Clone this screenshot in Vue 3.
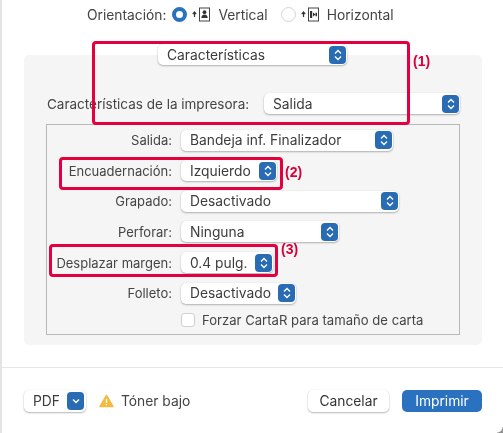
<script setup>
const rows = [
  { label: 'Salida:', value: 'Bandeja inf. Finalizador', width: 212, gap: 30 },
  { label: 'Encuadernación:', value: 'Izquierdo', width: 96, gap: 31 },
  { label: 'Grapado:', value: 'Desactivado', width: 218, gap: 30 },
  { label: 'Perforar:', value: 'Ninguna', width: 158, gap: 31 },
  { label: 'Desplazar margen:', value: '0.4 pulg.', width: 92, gap: 31 },
  { label: 'Folleto:', value: 'Desactivado', width: 115, gap: 30 }
]
</script>

<template>
  <div class="dialog">
    <div class="orientation">
      <span class="ori-label">Orientación:</span>
      <span class="radio on"></span>
      <svg class="ori-icon" width="20" height="15" viewBox="0 0 20 15">
        <path d="M3.5 10V5.5M1.8 7.2 3.5 5l1.7 2.2" fill="none" stroke="#333" stroke-width="1.2" />
        <rect x="8.5" y="1" width="10" height="13" fill="#fff" stroke="#444" />
        <circle cx="13.5" cy="5.2" r="1.9" fill="#333" />
        <path d="M10.3 11c0-2.3 1.5-3.5 3.2-3.5s3.2 1.2 3.2 3.5z" fill="#333" />
      </svg>
      <span class="ori-text first">Vertical</span>
      <span class="radio"></span>
      <svg class="ori-icon" width="20" height="15" viewBox="0 0 20 15">
        <path d="M3.5 10V5.5M1.8 7.2 3.5 5l1.7 2.2" fill="none" stroke="#333" stroke-width="1.2" />
        <rect x="8.5" y="1" width="10" height="13" fill="#fff" stroke="#444" />
        <path d="M10 4h2.2v7H10zM13 5.5l2.5 2-2.5 2zM15.5 5.7H17v3.6h-1.5z" fill="#333" />
      </svg>
      <span class="ori-text">Horizontal</span>
    </div>

    <section class="panel">
      <div class="popup top-popup">
        <span>Características</span>
        <span class="stepper">
          <svg width="8" height="12" viewBox="0 0 8 12"><path d="M1 4.5 4 1.5l3 3M1 7.5l3 3 3-3" fill="none" stroke="#fff" stroke-width="1.3" /></svg>
        </span>
      </div>

      <div class="features">
        <span class="feat-label">Características de la impresora:</span>
        <div class="popup feat-popup">
          <span>Salida</span>
          <span class="stepper">
            <svg width="8" height="12" viewBox="0 0 8 12"><path d="M1 4.5 4 1.5l3 3M1 7.5l3 3 3-3" fill="none" stroke="#fff" stroke-width="1.3" /></svg>
          </span>
        </div>
      </div>

      <div class="inner">
        <div v-for="r in rows" :key="r.label" class="row" :style="{ height: r.gap + 'px' }">
          <span class="row-label">{{ r.label }}</span>
          <div class="popup" :style="{ width: r.width + 'px' }">
            <span>{{ r.value }}</span>
            <span class="stepper">
              <svg width="8" height="12" viewBox="0 0 8 12"><path d="M1 4.5 4 1.5l3 3M1 7.5l3 3 3-3" fill="none" stroke="#fff" stroke-width="1.3" /></svg>
            </span>
          </div>
        </div>
        <label class="check-row">
          <span class="check"></span>
          <span>Forzar CartaR para tamaño de carta</span>
        </label>
      </div>

      <div class="mark mark-1"></div>
      <span class="num num-1">(1)</span>
      <div class="mark mark-2"></div>
      <span class="num num-2">(2)</span>
      <div class="mark mark-3"></div>
      <span class="num num-3">(3)</span>
    </section>

    <footer class="footer">
      <div class="pdf">
        <span>PDF</span>
        <span class="pdf-arrow">
          <svg width="8" height="6" viewBox="0 0 8 6"><path d="M1 1.5 4 4.5l3-3" fill="none" stroke="#fff" stroke-width="1.4" /></svg>
        </span>
      </div>
      <svg class="warn" width="15" height="14" viewBox="0 0 16 14">
        <path d="M8 1 15 13H1z" fill="#f5b93f" stroke="#f5b93f" stroke-width="1.5" stroke-linejoin="round" />
        <path d="M8 4.5v4.5M8 10.2v1.4" stroke="#fff" stroke-width="1.4" />
      </svg>
      <span class="toner">Tóner bajo</span>
      <button class="btn cancel">Cancelar</button>
      <button class="btn print">Imprimir</button>
    </footer>
    <div class="corner"></div>
  </div>
</template>

<style>
html, body { margin: 0; background: #fff; }
</style>

<style scoped>
.dialog {
  position: relative;
  width: 503px;
  height: 433px;
  box-sizing: border-box;
  overflow: hidden;
  display: flex;
  flex-direction: column;
  background: #fff;
  border-left: 2px solid #e4e4e4;
  font-family: Inter, "Liberation Sans", Arial, sans-serif;
  font-size: 13.8px;
  color: #3c3c3c;
  filter: blur(0.3px);
}
.orientation {
  height: 29px;
  display: flex;
  align-items: center;
  padding-left: 85px;
  color: #444;
}
.ori-label { margin-right: 6px; }
.radio {
  flex: none;
  width: 15px;
  height: 15px;
  box-sizing: border-box;
  border-radius: 50%;
  border: 1px solid #d4d4d4;
  background: #fff;
}
.radio.on { border: 4.5px solid #2a72bf; }
.ori-icon { flex: none; margin-left: 4px; margin-right: 7px; }
.ori-text.first { margin-right: 13px; }
.panel {
  position: relative;
  margin: 26px 21px 0 22px;
  height: 290px;
  box-sizing: border-box;
  background: #f5f5f5;
  border-radius: 5px;
  padding: 0 22px;
}
.popup {
  box-sizing: border-box;
  height: 21px;
  display: flex;
  align-items: center;
  justify-content: space-between;
  padding: 0 1px 0 9px;
  background: #fff;
  border-radius: 5px;
  box-shadow: 0 1px 2px rgba(0, 0, 0, 0.28), 0 0 1px rgba(0, 0, 0, 0.12);
}
.top-popup {
  position: relative;
  top: -11px;
  left: 112px;
  width: 189px;
}
.stepper {
  flex: none;
  width: 17px;
  height: 18px;
  border-radius: 4px;
  background: #2a6cb4;
  display: flex;
  align-items: center;
  justify-content: center;
}
.features {
  display: flex;
  align-items: center;
  margin-top: 17px;
  height: 21px;
}
.feat-label { width: 217px; white-space: nowrap; color: #444; margin-left: 1px; font-size: 13.5px; }
.feat-popup { width: 196px; }
.inner {
  margin-top: 10px;
  height: 211px;
  box-sizing: border-box;
  background: #f5f5f5;
  border: 1px solid #b8b8b8;
}
.row {
  display: flex;
  align-items: center;
}
.row-label {
  width: 125px;
  text-align: right;
  margin-right: 9px;
  white-space: nowrap;
  color: #444;
  font-size: 13px;
}
.check-row {
  display: flex;
  align-items: center;
  margin-left: 134px;
  margin-top: 2px;
  height: 20px;
  color: #444;
  font-size: 13.1px;
}
.check {
  width: 14px;
  height: 14px;
  box-sizing: border-box;
  background: #fff;
  border: 1px solid #d2d2d2;
  border-radius: 3px;
  margin-right: 7px;
}
.mark {
  position: absolute;
  box-sizing: border-box;
  border: 3px solid #e4003f;
  border-radius: 4px;
}
.mark-1 { left: 68px; top: -14px; width: 318px; height: 84px; }
.mark-2 { left: 35px; top: 102px; width: 224px; height: 33px; }
.mark-3 { left: 25px; top: 189px; width: 229px; height: 33px; }
.num {
  position: absolute;
  font-family: "Liberation Sans", Arial, sans-serif;
  font-weight: 700;
  font-size: 14px;
  color: #d6003a;
}
.num-1 { left: 389px; top: -2px; }
.num-2 { left: 261px; top: 109px; }
.num-3 { left: 257px; top: 186px; }
.footer {
  position: relative;
  flex: 1;
  margin-top: 22px;
  border-top: 1px solid #e6e6e6;
  display: flex;
  align-items: center;
  padding: 0 21px 0 22px;
}
.pdf {
  box-sizing: border-box;
  width: 62px;
  height: 22px;
  display: flex;
  align-items: center;
  justify-content: space-between;
  padding: 0 2px 0 9px;
  border-radius: 5px;
  background: #fff;
  box-shadow: 0 1px 2px rgba(0, 0, 0, 0.28), 0 0 1px rgba(0, 0, 0, 0.12);
}
.pdf-arrow {
  width: 17px;
  height: 18px;
  border-radius: 4px;
  background: #2a6cb4;
  display: flex;
  align-items: center;
  justify-content: center;
}
.warn { margin-left: 13px; margin-right: 7px; }
.toner { flex: 1; color: #444; }
.btn {
  box-sizing: border-box;
  height: 22px;
  border: none;
  border-radius: 5px;
  font: inherit;
  padding: 0;
}
.cancel {
  width: 81px;
  margin-right: 13px;
  background: #fff;
  color: #333;
  box-shadow: 0 1px 2px rgba(0, 0, 0, 0.28), 0 0 1px rgba(0, 0, 0, 0.12);
}
.print {
  width: 80px;
  background: #2a72bf;
  color: #fff;
}
.corner {
  position: absolute;
  right: 0;
  bottom: 0;
  width: 6px;
  height: 6px;
  background: radial-gradient(circle at 0 0, #fff 5px, #8f8f8f 6px);
}
</style>
